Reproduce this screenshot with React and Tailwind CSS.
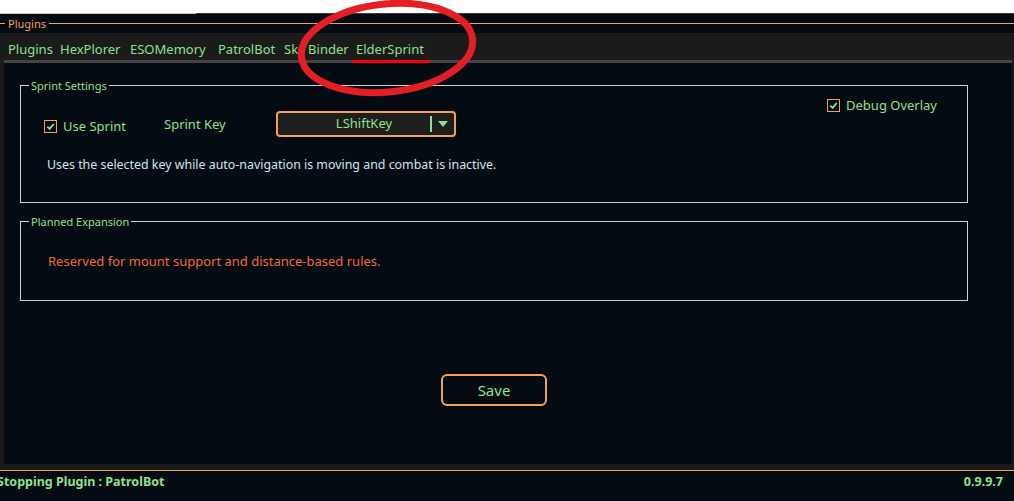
import React from "react";

const font = { fontFamily: '"Noto Sans", "Open Sans", sans-serif' };

const Check = ({ className = "" }) => (
  <span
    className={`inline-flex items-center justify-center w-[13px] h-[13px] border border-[#f0a060] ${className}`}
  >
    <svg width="9" height="9" viewBox="0 0 10 10">
      <path d="M1.5 5.2 L4 7.6 L8.6 2.2" stroke="#8fe08f" strokeWidth="2" fill="none" />
    </svg>
  </span>
);

const tabs = [
  { t: "Plugins", w: "w-[52px]" },
  { t: "HexPlorer", w: "w-[70px]" },
  { t: "ESOMemory", w: "w-[88px]" },
  { t: "PatrolBot", w: "w-[66px]" },
];

export default function App() {
  return (
    <div className="relative w-[1014px] h-[501px] bg-white overflow-hidden text-[#8fe08f]" style={font}>
      {/* top window strip */}
      <div className="h-[13px] bg-white" />
      <div className="h-[1px] bg-[#3a3a3a] flex">
        <div className="w-[196px] bg-[#c8c8c8]" />
      </div>

      {/* group title */}
      <div className="h-[19px] bg-[#050b12] flex items-center">
        <div className="w-[5px] h-[1px] bg-[#f0a060]" />
        <span className="px-[3px] text-[11px] leading-none text-[#f0a060]">Plugins</span>
        <div className="flex-1 h-[1px] bg-[#f0a060]" />
      </div>

      {/* tab strip */}
      <div className="h-[27px] bg-[#1b1b1b] flex items-center pl-[8px] pt-[5px] text-[13px] leading-none">
        {tabs.map((x) => (
          <span key={x.t} className={`${x.w} shrink-0`}>
            {x.t}
          </span>
        ))}
        <span className="w-[72px] shrink-0 flex">
          <span>Sk</span>
          <span className="ml-[10px]">Binder</span>
        </span>
        <span className="shrink-0">ElderSprint</span>
      </div>

      <div className="h-[410px] bg-[#1b1b1b] pl-[4px] pr-[2px] flex flex-col">
        <div className="h-[3px] bg-[#444444] flex">
          <div className="ml-[348px] w-[78px] bg-[#ff0000]" />
        </div>
        <div className="flex-1 bg-[#050b12] pt-[17px] pl-[16px] pr-[44px] flex flex-col">
          {/* Sprint Settings */}
          <fieldset className="border border-[#d0d0d0] h-[123px] px-[6px] m-0 relative">
            <legend className="px-[2px] text-[11px] leading-none text-[#8fe08f] ml-[2px]">
              Sprint Settings
            </legend>
            <div className="flex items-center mt-[24px] ml-[17px] text-[13px]">
              <div className="w-[120px] flex items-center">
                <Check />
                <span className="ml-[6px] mt-[1px]">Use Sprint</span>
              </div>
              <span className="w-[112px] -mt-[3px]">Sprint Key</span>
              <div className="-mt-[4px] w-[180px] h-[26px] rounded-[4px] border-2 border-[#f0a060] bg-[#1e1e1e] flex items-center">
                <span className="flex-1 text-center pl-[20px] text-[13px]">LShiftKey</span>
                <div className="w-[2px] h-[16px] bg-[#8fe08f]" />
                <svg className="mx-[6px]" width="10" height="6" viewBox="0 0 10 6">
                  <path d="M0 0 L10 0 L5 6 Z" fill="#8fe08f" />
                </svg>
              </div>
            </div>
            <div className="absolute right-[30px] top-[5px] flex items-center text-[13px]">
              <Check />
              <span className="ml-[6px]">Debug Overlay</span>
            </div>
            <p className="mt-[19px] ml-[20px] text-[12.4px] text-[#cfe6f0]">
              Uses the selected key while auto-navigation is moving and combat is inactive.
            </p>
          </fieldset>

          {/* Planned Expansion */}
          <fieldset className="mt-[13px] border border-[#d0d0d0] h-[85px] px-[6px] m-0">
            <legend className="px-[2px] text-[11px] leading-none text-[#8fe08f] ml-[2px]">
              Planned Expansion
            </legend>
            <p className="mt-[25px] ml-[21px] text-[13px] text-[#f06a38]">
              Reserved for mount support and distance-based rules.
            </p>
          </fieldset>

          <div className="flex justify-center mt-[73px]">
            <button className="w-[106px] h-[32px] rounded-[6px] border-2 border-[#f0a060] text-[15px] text-[#8fe08f] bg-transparent">
              Save
            </button>
          </div>
        </div>
        <div className="h-[6px]" />
      </div>

      {/* status bar */}
      <div className="h-[1px] bg-[#f0a060]" />
      <div className="h-[30px] bg-[#050b12] flex items-start justify-between pt-[2px] text-[12.5px] font-bold">
        <span className="-ml-[3px]">Stopping Plugin : PatrolBot</span>
        <span className="mr-[11px]">0.9.9.7</span>
      </div>

      {/* red annotation ellipse */}
      <svg className="absolute left-0 top-0 pointer-events-none" width="1014" height="501">
        <ellipse
          cx="387"
          cy="48"
          rx="86"
          ry="44"
          transform="rotate(-6 387 48)"
          fill="none"
          stroke="#e31e24"
          strokeWidth="7"
        />
      </svg>
    </div>
  );
}
